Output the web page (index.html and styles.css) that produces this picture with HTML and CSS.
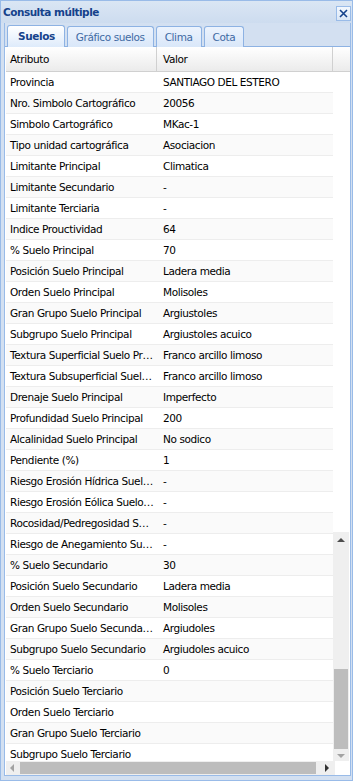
FILE: index.html
```html
<!DOCTYPE html>
<html>
<head>
<meta charset="utf-8">
<link rel="stylesheet" href="styles.css">
</head>
<body>
<div class="window">
  <div class="header">
    <span class="title">Consulta múltiple</span>
    <span class="close"><svg width="11" height="11" viewBox="0 0 11 11"><path d="M2 2 L9 9 M9 2 L2 9" stroke="#15428b" stroke-width="1.6" fill="none"/></svg></span>
  </div>
  <div class="panel">
    <div class="tabstrip">
      <div class="tab active">Suelos</div>
      <div class="tab">Gráfico suelos</div>
      <div class="tab">Clima</div>
      <div class="tab">Cota</div>
    </div>
    <div class="grid">
      <div class="ghead">
        <div class="hc c1">Atributo</div>
        <div class="hc c2">Valor</div>
        <div class="hc c3"></div>
      </div>
      <div class="gbody">
        <div class="rows">
          <div class="row"><div class="c1">Provincia</div><div class="c2">SANTIAGO DEL ESTERO</div></div>
          <div class="row"><div class="c1">Nro. Simbolo Cartográfico</div><div class="c2">20056</div></div>
          <div class="row"><div class="c1">Simbolo Cartográfico</div><div class="c2">MKac-1</div></div>
          <div class="row"><div class="c1">Tipo unidad cartográfica</div><div class="c2">Asociacion</div></div>
          <div class="row"><div class="c1">Limitante Principal</div><div class="c2">Climatica</div></div>
          <div class="row"><div class="c1">Limitante Secundario</div><div class="c2">-</div></div>
          <div class="row"><div class="c1">Limitante Terciaria</div><div class="c2">-</div></div>
          <div class="row"><div class="c1">Indice Prouctividad</div><div class="c2">64</div></div>
          <div class="row"><div class="c1">% Suelo Principal</div><div class="c2">70</div></div>
          <div class="row"><div class="c1">Posición Suelo Principal</div><div class="c2">Ladera media</div></div>
          <div class="row"><div class="c1">Orden Suelo Principal</div><div class="c2">Molisoles</div></div>
          <div class="row"><div class="c1">Gran Grupo Suelo Principal</div><div class="c2">Argiustoles</div></div>
          <div class="row"><div class="c1">Subgrupo Suelo Principal</div><div class="c2">Argiustoles acuico</div></div>
          <div class="row"><div class="c1">Textura Superficial Suelo Principal</div><div class="c2">Franco arcillo limoso</div></div>
          <div class="row"><div class="c1">Textura Subsuperficial Suelo Principal</div><div class="c2">Franco arcillo limoso</div></div>
          <div class="row"><div class="c1">Drenaje Suelo Principal</div><div class="c2">Imperfecto</div></div>
          <div class="row"><div class="c1">Profundidad Suelo Principal</div><div class="c2">200</div></div>
          <div class="row"><div class="c1">Alcalinidad Suelo Principal</div><div class="c2">No sodico</div></div>
          <div class="row"><div class="c1">Pendiente (%)</div><div class="c2">1</div></div>
          <div class="row"><div class="c1">Riesgo Erosión Hídrica Suelo Principal</div><div class="c2">-</div></div>
          <div class="row"><div class="c1">Riesgo Erosión Eólica Suelo Principal</div><div class="c2">-</div></div>
          <div class="row"><div class="c1">Rocosidad/Pedregosidad Suelo Principal</div><div class="c2">-</div></div>
          <div class="row"><div class="c1">Riesgo de Anegamiento Suelo Principal</div><div class="c2">-</div></div>
          <div class="row"><div class="c1">% Suelo Secundario</div><div class="c2">30</div></div>
          <div class="row"><div class="c1">Posición Suelo Secundario</div><div class="c2">Ladera media</div></div>
          <div class="row"><div class="c1">Orden Suelo Secundario</div><div class="c2">Molisoles</div></div>
          <div class="row"><div class="c1">Gran Grupo Suelo Secundario</div><div class="c2">Argiudoles</div></div>
          <div class="row"><div class="c1">Subgrupo Suelo Secundario</div><div class="c2">Argiudoles acuico</div></div>
          <div class="row"><div class="c1">% Suelo Terciario</div><div class="c2">0</div></div>
          <div class="row"><div class="c1">Posición Suelo Terciario</div><div class="c2"></div></div>
          <div class="row"><div class="c1">Orden Suelo Terciario</div><div class="c2"></div></div>
          <div class="row"><div class="c1">Gran Grupo Suelo Terciario</div><div class="c2"></div></div>
          <div class="row"><div class="c1">Subgrupo Suelo Terciario</div><div class="c2"></div></div>
        </div>
        <div class="vscroll">
          <div class="vspace"></div>
          <div class="vtrack">
            <div class="arrow-up"></div>
            <div class="vfill"></div>
            <div class="vthumb"></div>
            <div class="arrow-down"></div>
          </div>
        </div>
      </div>
      <div class="hscroll">
        <div class="arrow-left"></div>
        <div class="hthumb"></div>
        <div class="arrow-right"></div>
        <div class="corner"></div>
      </div>
    </div>
  </div>
</div>
</body>
</html>
```
FILE: styles.css
```css
* { box-sizing: border-box; }
html, body { margin: 0; padding: 0; background: #ffffff; }
body { font-family: "DejaVu Sans", sans-serif; font-size: 11px; }

.window {
  width: 353px;
  height: 781px;
  border: 1px solid #99bbe8;
  background: #d3e0f1;
  display: flex;
  flex-direction: column;
  overflow: hidden;
}

.header {
  height: 22px;
  flex: none;
  display: flex;
  align-items: center;
  justify-content: space-between;
  padding: 0 1px 0 2px;
  background: linear-gradient(#dae6f4, #cddcef);
}
.title {
  font-family: "DejaVu Sans", sans-serif;
  font-size: 10.5px;
  font-weight: bold;
  color: #15428b;
  letter-spacing: -0.5px;
  margin-top: -1px;
}
.close {
  width: 15px;
  height: 15px;
  border: 1px solid #99bbe8;
  background: linear-gradient(#f3f8fe, #dbe7f6);
  display: flex;
  align-items: center;
  justify-content: center;
  margin-top: 3px;
}

.panel {
  flex: 1;
  margin: 0 1px 4px 3px;
  border: 1px solid #99bbe8;
  border-top: none;
  display: flex;
  flex-direction: column;
  background: #ffffff;
  min-height: 0;
}

.tabstrip {
  height: 24px;
  flex: none;
  display: flex;
  align-items: flex-end;
  gap: 2px;
  padding: 0 0 0 1px;
  background: #d3e0f1;
  border-bottom: 1px solid #8db2e3;
}
.tab {
  height: 21px;
  padding: 0 8px;
  border: 1px solid #8db2e3;
  border-bottom: none;
  border-radius: 3px 3px 0 0;
  background: linear-gradient(#ecf3fd, #d9e7f9);
  color: #416aa3;
  font-family: "DejaVu Sans", sans-serif;
  font-size: 10.5px;
  line-height: 20px;
  letter-spacing: -0.4px;
  margin-bottom: -1px;
}
.tab.active {
  height: 22px;
  background: linear-gradient(#ffffff, #deebfb);
  color: #15428b;
  font-weight: bold;
  padding: 0 9px 0 10px;
  margin-left: 1px;
}

.grid {
  flex: 1;
  display: flex;
  flex-direction: column;
  min-height: 0;
  margin-left: 1px;
  font-family: "DejaVu Sans", sans-serif;
  font-size: 10.5px;
  letter-spacing: -0.4px;
  color: #000;
}
.ghead {
  height: 25px;
  flex: none;
  display: flex;
  background: linear-gradient(#ffffff, #f3f3f3 60%, #ebebeb);
  border-bottom: 1px solid #d0d0d0;
}
.hc {
  line-height: 24px;
  padding-left: 4px;
  border-right: 1px solid #d0d0d0;
}
.ghead .c1 { width: 151px; }
.ghead .c2 { width: 176px; padding-left: 6px; }
.ghead .c3 { flex: 1; border-right: none; }

.gbody {
  flex: 1;
  display: flex;
  min-height: 0;
  overflow: hidden;
}
.rows {
  width: 327px;
  flex: none;
}
.row {
  height: 21px;
  display: flex;
  border-bottom: 1px solid #ededed;
  background: #ffffff;
  line-height: 20px;
}
.row:nth-child(even) { background: #fafafa; }
.row .c1 {
  width: 151px;
  padding-left: 4px;
  padding-right: 2px;
  white-space: nowrap;
  overflow: hidden;
  text-overflow: ellipsis;
}
.row .c2 {
  width: 176px;
  padding-left: 6px;
  white-space: nowrap;
  overflow: hidden;
}

.vscroll {
  width: 16px;
  flex: none;
  display: flex;
  flex-direction: column;
}
.vspace { height: 460px; background: #ffffff; flex: none; }
.vtrack {
  flex: 1;
  background: #efefef;
  display: flex;
  flex-direction: column;
  align-items: center;
}
.arrow-up {
  margin-top: 6px;
  width: 0; height: 0;
  border-left: 4px solid transparent;
  border-right: 4px solid transparent;
  border-bottom: 4px solid #4d4d4d;
}
.vfill { flex: 1; }
.vthumb {
  width: 14px;
  height: 80px;
  background: #bdbdbd;
}
.arrow-down {
  margin: 5px 0 3px;
  width: 0; height: 0;
  border-left: 4px solid transparent;
  border-right: 4px solid transparent;
  border-top: 4px solid #a3a3a3;
}

.hscroll {
  height: 14px;
  flex: none;
  display: flex;
  align-items: center;
  background: #efefef;
}
.arrow-left {
  margin: 0 6px 0 4px;
  width: 0; height: 0;
  border-top: 4px solid transparent;
  border-bottom: 4px solid transparent;
  border-right: 4px solid #a3a3a3;
}
.hthumb {
  width: 296px;
  height: 12px;
  background: #bdbdbd;
}
.arrow-right {
  margin: 0 6px 0 9px;
  width: 0; height: 0;
  border-top: 4px solid transparent;
  border-bottom: 4px solid transparent;
  border-left: 4px solid #333333;
}
.corner { flex: 1; align-self: stretch; background: #ffffff; }
```
